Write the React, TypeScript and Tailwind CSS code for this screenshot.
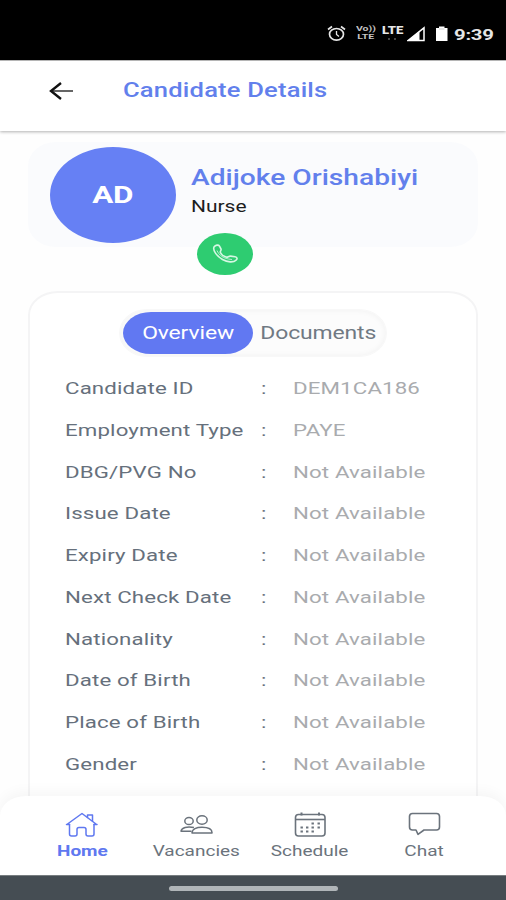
import { useState } from 'react';
import type { ReactNode } from 'react';
import clsx from 'clsx';

type NavId = 'home' | 'vacancies' | 'schedule' | 'chat';

const DETAILS = [
  { label: 'Candidate ID', value: 'DEM1CA186' },
  { label: 'Employment Type', value: 'PAYE' },
  { label: 'DBG/PVG No', value: 'Not Available' },
  { label: 'Issue Date', value: 'Not Available' },
  { label: 'Expiry Date', value: 'Not Available' },
  { label: 'Next Check Date', value: 'Not Available' },
  { label: 'Nationality', value: 'Not Available' },
  { label: 'Date of Birth', value: 'Not Available' },
  { label: 'Place of Birth', value: 'Not Available' },
  { label: 'Gender', value: 'Not Available' },
];

const HomeIcon = () => (
  <svg width="34" height="26" viewBox="0 0 34 26" fill="none" stroke="currentColor" strokeWidth="1.500" strokeLinejoin="round" strokeLinecap="round">
    <path d="M4.500 12.500 V22 Q4.500 24 6.500 24 H10 Q12 24 12 22 V17.500 Q12 15.500 14 15.500 H19 Q21 15.500 21 17.500 V22 Q21 24 23 24 H27 Q29 24 29 22 V12.500" />
    <path d="M1.500 12.500 H4.500 M29 12.500 H32 M2.500 12 L17 1.500 L31 12" />
    <path d="M22.500 5.500 V3 H27.500 V9" />
  </svg>
);

const PeopleIcon = () => (
  <svg width="34" height="26" viewBox="0 0 34 26" fill="none" stroke="currentColor" strokeWidth="1.500" strokeLinejoin="round">
    <ellipse cx="10" cy="9" rx="4.200" ry="3.600" />
    <ellipse cx="23" cy="8" rx="5.200" ry="4.200" />
    <path d="M13 21 C13 17 17.500 15.200 23 15.200 C28.500 15.200 33 17 33 20.500 V21 Z" />
    <path d="M15 15.600 C8 13.800 2.500 16 2 19.200 H12.500" />
  </svg>
);

const CalendarIcon = () => (
  <svg width="34" height="26" viewBox="0 0 34 26" fill="none" stroke="currentColor" strokeWidth="1.600">
    <rect x="2.500" y="2.500" width="29.500" height="21.500" rx="3" />
    <path d="M2.500 7.500 H32" />
    <path d="M8.500 0.500 V3.500 M26 0.500 V3.500" strokeWidth="2" />
    <path d="M18.500 11.500 h2.400 M24.500 11.500 h2.400 M7.500 15.500 h2.400 M13 15.500 h2.400 M18.500 15.500 h2.400 M24.500 15.500 h2.400 M7.500 19.500 h2.400 M13 19.500 h2.400 M18.500 19.500 h2.400" strokeWidth="2" />
  </svg>
);

const ChatIcon = () => (
  <svg width="34" height="26" viewBox="0 0 34 26" fill="none" stroke="currentColor" strokeWidth="1.600" strokeLinejoin="round">
    <path d="M5.500 1.500 H29.500 Q32.500 1.500 32.500 4.500 V15 Q32.500 18 29.500 18 H17 L11 22.300 L9 18 H5.500 Q2.500 18 2.500 15 V4.500 Q2.500 1.500 5.500 1.500 Z" />
  </svg>
);

const NAV: { id: NavId; label: string; icon: () => ReactNode }[] = [
  { id: 'home', label: 'Home', icon: HomeIcon },
  { id: 'vacancies', label: 'Vacancies', icon: PeopleIcon },
  { id: 'schedule', label: 'Schedule', icon: CalendarIcon },
  { id: 'chat', label: 'Chat', icon: ChatIcon },
];

// Extended lettering, grows to the right of its own start unless centered
function Wide({ className, center, children }: { className?: string; center?: boolean; children: ReactNode }) {
  return (
    <span className={clsx('inline-block scale-x-[1.31] whitespace-nowrap', center ? 'origin-center' : 'origin-left', className)}>
      {children}
    </span>
  );
}

function StatusBar() {
  return (
    <div className="flex h-[60px] shrink-0 items-start bg-black pt-[25px] pl-[327px] text-[#e6e6e6]">
      <svg width="19" height="17" viewBox="0 0 19 17" fill="none" stroke="currentColor" strokeWidth="1.700">
        <ellipse cx="9.500" cy="9.300" rx="7" ry="5.800" />
        <path d="M9.500 6 V9.500 L12 11.500" strokeWidth="1.300" />
        <path d="M1 4.500 L5 1.500 M18 4.500 L14 1.500" />
      </svg>
      <div className="ml-[10px] flex w-[23px] flex-col items-start text-[8px] font-bold leading-[8px] text-[#c4c4c4]">
        <Wide>Vo))</Wide>
        <Wide className="pl-[1px]">LTE</Wide>
      </div>
      <div className="ml-[3px] w-[22px] pt-[1px] text-[10px] font-black leading-[10px]">
        <Wide>LTE</Wide>
        <div className="mt-[2px] ml-[6px] flex gap-[4px]">
          <i className="h-[2px] w-[2px] bg-[#444]" />
          <i className="h-[2px] w-[2px] bg-[#444]" />
        </div>
      </div>
      <svg className="ml-[3px]" width="19" height="17" viewBox="0 0 19 17" fill="none">
        <path d="M1 15.500 L17 2.800 V15.500 Z" stroke="#fff" strokeWidth="1.500" />
        <path d="M0.500 16 L12.500 6 V16 Z" fill="#fff" />
      </svg>
      <svg className="ml-[9px]" width="14" height="17" viewBox="0 0 14 17">
        <path d="M1 3 H4 V1.500 H9.500 V3 H12.500 V16 H1 Z" fill="#fff" />
        <path d="M4 4 H9.500" stroke="#ccc" strokeWidth="1" />
      </svg>
      <Wide className="ml-[5px] pt-[2px] text-[15.500px] font-bold leading-[16px] tracking-[-0.200px]">9:39</Wide>
    </div>
  );
}

function DetailRow({ label, value }: { label: string; value: string }) {
  return (
    <div className="flex h-[41.780px] items-center text-[17px] tracking-[0.100px]">
      <div className="w-[195.500px] text-[#66707c]">
        <Wide>{label}</Wide>
      </div>
      <div className="w-[32.500px] text-[#66707c]">
        <Wide>:</Wide>
      </div>
      <div className="text-[#a9abae]">
        <Wide>{value}</Wide>
      </div>
    </div>
  );
}

export default function App() {
  const [tab, setTab] = useState<'overview' | 'documents'>('overview');
  const [active, setActive] = useState<NavId>('home');

  return (
    <div className="flex h-[900px] w-[506px] flex-col overflow-hidden bg-[#fefefe] font-[Roboto,sans-serif]">
      <StatusBar />

      <header className="z-10 flex h-[71px] shrink-0 items-center border-t border-[#b5b5b5] bg-white pb-[11px] pl-[49px] shadow-[0_1px_3px_rgba(0,0,0,0.300)]">
        <button className="mr-[49px]">
          <svg width="25" height="20" viewBox="0 0 25 20" fill="none">
            <path d="M2 10 H24" stroke="#666" strokeWidth="2" />
            <path d="M12 2 L2 10 L12 18" stroke="#111" strokeWidth="2.400" />
          </svg>
        </button>
        <h1 className="text-[19.500px] font-medium tracking-[0.150px] text-[#6280ec]">
          <Wide>Candidate Details</Wide>
        </h1>
      </header>

      <main className="flex min-h-0 flex-1 flex-col px-[28px] pt-[11px]">
        {/* Profile */}
        <section className="relative flex h-[105px] shrink-0 rounded-[28px/24px] bg-[#fafbfd] pt-[5px] pl-[22px]">
          <div className="flex h-[96px] w-[126px] items-center justify-center rounded-[50%] bg-[#6680f4] text-[24px] font-bold text-white">
            <Wide center className="tracking-[-0.300px]">AD</Wide>
          </div>
          <div className="flex flex-col items-start pt-[16px] pl-[15px]">
            <Wide className="text-[21.500px] font-medium leading-[30px] text-[#6280ec]">Adijoke Orishabiyi</Wide>
            <Wide className="text-[16px] leading-[27px] text-[#1d1d1d]">Nurse</Wide>
          </div>
          <button className="absolute top-[91px] left-[169px] flex h-[42px] w-[56px] items-center justify-center rounded-[50%] bg-[#2ecc71]">
            <svg width="26" height="20" viewBox="0 0 26 20" fill="none" stroke="#d6f7e3" strokeWidth="1.600" strokeLinejoin="round">
              <path d="M2 3 C3.500 0.800 6.500 0.500 7.500 2.200 L9 5 C9.600 6.500 7.800 7.200 8.400 8.500 C9.500 10.800 11.500 12.200 14 13 C15.800 13.600 16.500 12 18.500 12.100 L23 12.700 C25.500 13.200 25.500 14.800 24 16.200 C21.500 18.700 15.500 18.300 10.500 15.500 C5 12.300 0.500 6.500 2 3 Z" />
              <path d="M5 6.500 C7 11 11 14.800 20 15.500" strokeWidth="0.800" />
            </svg>
          </button>
        </section>

        {/* Details */}
        <section className="mt-[44px] flex min-h-0 flex-1 flex-col overflow-hidden rounded-t-[30px_24px] border-2 border-b-0 border-[#f4f4f5] bg-white">
          <div className="mx-auto mt-[16px] flex h-[48px] w-[268px] shrink-0 items-center rounded-[28px/24px] border border-[#f8f8f8] bg-[#fcfcfc] pl-[3px] shadow-[inset_0_0_6px_rgba(0,0,0,0.050)]">
            <button
              onClick={() => setTab('overview')}
              className={clsx(
                'h-[42px] w-[130px] rounded-[28px/21px] text-[17.500px] tracking-[-0.100px]',
                tab === 'overview' ? 'bg-[#6178f2] text-white' : 'text-[#707983]'
              )}
            >
              <Wide center>Overview</Wide>
            </button>
            <button
              onClick={() => setTab('documents')}
              className={clsx(
                'h-[42px] w-[130px] rounded-[28px/21px] text-[17.500px] tracking-[-0.100px]',
                tab === 'documents' ? 'bg-[#6178f2] text-white' : 'text-[#707983]'
              )}
            >
              <Wide center>Documents</Wide>
            </button>
          </div>
          <div className="mt-[11px] pl-[35px]">
            {DETAILS.map((d) => (
              <DetailRow key={d.label} label={d.label} value={d.value} />
            ))}
          </div>
        </section>
      </main>

      <nav className="z-10 flex h-[79px] shrink-0 rounded-t-[26px_20px] bg-white px-[25px] pt-[16px] shadow-[0_-4px_14px_rgba(0,0,0,0.040)]">
        {NAV.map((item) => (
          <button
            key={item.id}
            onClick={() => setActive(item.id)}
            className={clsx(
              'flex w-[114px] flex-col items-center',
              active === item.id ? 'font-bold text-[#5f78f0]' : 'text-[#6b737c]'
            )}
          >
            <item.icon />
            <Wide center className="text-[14.500px] leading-[27px]">{item.label}</Wide>
          </button>
        ))}
      </nav>

      <footer className="z-10 flex h-[25px] shrink-0 items-center justify-center border-t border-[#777d80] bg-[#454d53]">
        <div className="h-[5px] w-[169px] rounded-full bg-[#b0b5b8]" />
      </footer>
    </div>
  );
}
